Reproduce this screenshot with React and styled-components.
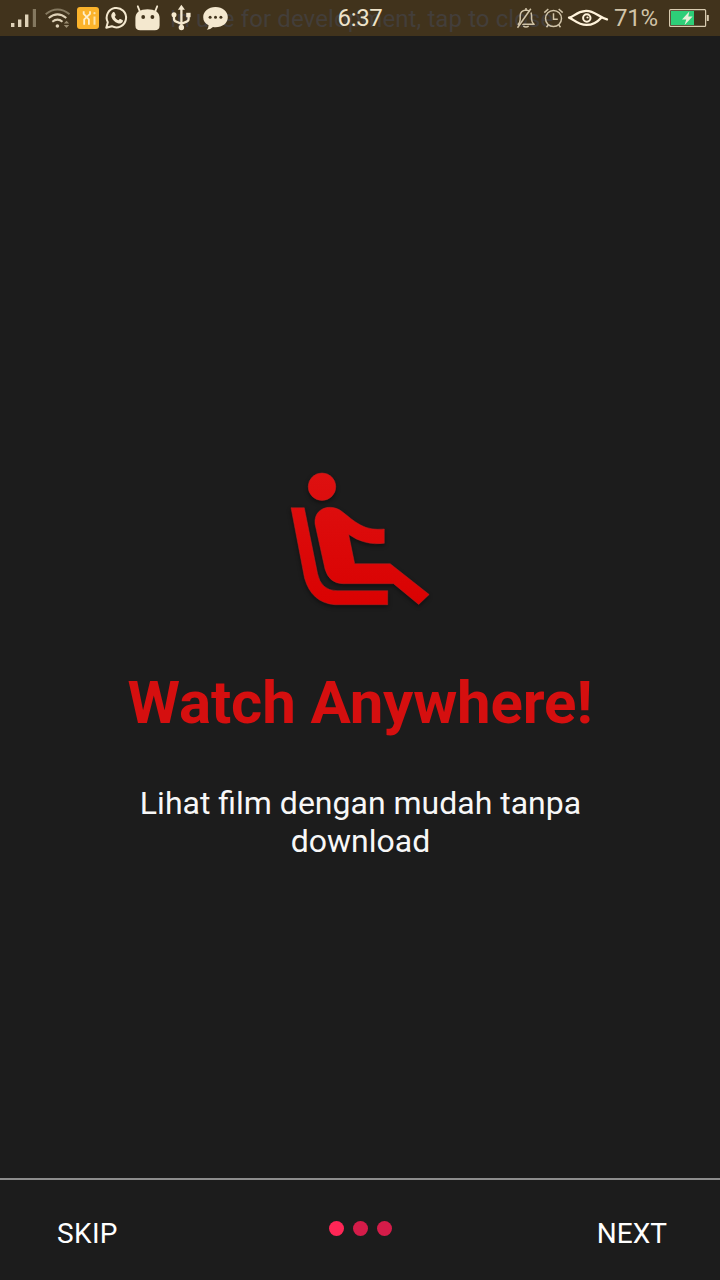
import React from 'react';
import styled, { createGlobalStyle } from 'styled-components';

const GlobalStyle = createGlobalStyle`
  * { box-sizing: border-box; }
  body { margin: 0; background: #1c1c1c; }
`;

const Screen = styled.div`
  width: 720px;
  height: 1280px;
  display: flex;
  flex-direction: column;
  overflow: hidden;
  background: #1c1c1c;
  color: #fff;
  font-family: Roboto, 'Liberation Sans', sans-serif;
`;

const StatusBar = styled.header`
  position: relative;
  flex: none;
  display: grid;
  grid-template-columns: 1fr auto 1fr;
  align-items: center;
  height: 36px;
  padding: 0 11px;
  background: #41331c;
  color: #e9dcc0;
`;

const Ticker = styled.span`
  position: absolute;
  left: 170px;
  top: 5px;
  font-size: 24px;
  line-height: 28px;
  letter-spacing: 0.1px;
  white-space: nowrap;
  color: #433e3a;
`;

const IconGroup = styled.div`
  position: relative;
  display: flex;
  align-items: center;
  justify-content: ${(p) => (p.$end ? 'flex-end' : 'flex-start')};
`;

const StatusIcon = styled.svg`
  display: block;
  flex: none;
  margin-left: ${(p) => p.$gap || 0}px;
  overflow: visible;
`;

const Clock = styled.time`
  position: relative;
  padding-top: 1px;
  font-size: 24px;
  line-height: 35px;
  letter-spacing: -0.3px;
  color: #eee3ca;
`;

const BatteryLevel = styled.span`
  width: 44px;
  margin-left: 6px;
  font-size: 24px;
  line-height: 36px;
  letter-spacing: -0.3px;
  color: #d1c4a8;
`;

const Slide = styled.main`
  flex: 1;
  display: flex;
  flex-direction: column;
  align-items: center;
  padding-top: 424px;
`;

const SeatArt = styled.svg`
  display: block;
  width: 160px;
  height: 160px;
  filter: drop-shadow(0 2px 2px rgba(0, 0, 0, 0.45));
`;

const Title = styled.h1`
  margin: 48px 0 0;
  font-size: 60px;
  font-weight: 700;
  line-height: 70px;
  letter-spacing: -0.14px;
  white-space: nowrap;
  color: #d50f0f;
`;

const Description = styled.p`
  width: 480px;
  margin: 46px 0 0;
  padding-left: 1px;
  font-size: 32px;
  line-height: 38px;
  text-align: center;
  color: #f7f7f7;
`;

const BottomBar = styled.footer`
  flex: none;
  display: grid;
  grid-template-columns: 1fr auto 1fr;
  height: 102px;
  padding: 0 53px;
  border-top: 2px solid #8d8d8d;
`;

const NavButton = styled.button`
  justify-self: ${(p) => (p.$end ? 'end' : 'start')};
  align-self: start;
  margin: 37px 0 0 ${(p) => (p.$end ? 0 : 4)}px;
  padding: 0;
  border: 0;
  background: none;
  color: #fff;
  font: 400 28px/33px Roboto, 'Liberation Sans', sans-serif;
  letter-spacing: ${(p) => (p.$end ? 0 : 0.35)}px;
`;

const Dots = styled.div`
  display: flex;
  gap: 9px;
  padding-top: 41px;
`;

const Dot = styled.i`
  width: 15px;
  height: 15px;
  border-radius: 50%;
  background: ${(p) => (p.$active ? '#ff2656' : '#d41c49')};
`;

const CREAM = '#f4e8cf';

function Icon({ x, width, gap, children }) {
  return (
    <StatusIcon width={width} height="36" viewBox={`${x} 0 ${width} 36`} $gap={gap} fill="none" aria-hidden="true">
      {children}
    </StatusIcon>
  );
}

function Notifications() {
  return (
    <IconGroup>
      <Icon x={11} width={25}>
        <path d="M11 23h3.400v4H11zM18 19.500h3.400V27H18zM25 14.500h3.400V27H25z" fill="#dfd2b8" />
        <path d="M32.800 9H36v18h-3.200z" fill="#84785f" />
      </Icon>
      <Icon x={45} width={25} gap={9}>
        <path d="M45.700 14.200Q57.500 4.800 69.500 14.200" stroke="#857960" strokeWidth="2" />
        <path d="M48.700 18Q57.500 10.800 66.300 18M52.300 21.700Q57.500 17.500 62.500 21.700" stroke="#dfd2b8" strokeWidth="2" />
        <circle cx="57.400" cy="26" r="1.800" fill="#dfd2b8" />
        <path d="m63.800 23.600 2.700-2.900 2.700 2.900zM63.800 25l2.700 2.900 2.700-2.900z" fill="#978a6f" />
      </Icon>
      <Icon x={77} width={22} gap={7}>
        <rect x="77" y="7" width="22" height="22" rx="3" fill="#fbb32b" />
        <path d="M83.700 11.200v2.600l5.200 5.600v5.300M90 11.200v2.600l-5.800 5.600v5.300" stroke="#fff0cc" strokeWidth="1.800" />
        <path d="M94.500 16.500v8.200" stroke="#fde2a6" strokeWidth="2" />
        <circle cx="94.500" cy="13.200" r="1.100" fill="#fde2a6" />
      </Icon>
      <Icon x={105} width={22} gap={6}>
        <path d="m106.300 27.700 1.500-5.500a9.700 9.700 0 1 1 4 4z" stroke={CREAM} strokeWidth="2" strokeLinejoin="round" />
        <path d="M112.700 12.400c.8-.8 1.700-.6 2.100.3l.8 2c.2.7-.2 1.200-.9 2 .9 1.700 2.100 2.800 3.900 3.600.8-.9 1.100-1.500 1.800-1.200l2 1c.7.4.6.9.3 1.600-.8 1.700-2.800 2.200-4.800 1.500-3.400-1.200-5.200-3.200-6.400-6-.7-1.900.1-3.700 1.200-4.800z" fill={CREAM} />
      </Icon>
      <Icon x={135} width={25} gap={8}>
        <path d="m137.800 6.300 2.400 6M157.200 6.300l-2.400 6" stroke={CREAM} strokeWidth="1.800" strokeLinecap="round" />
        <path d="M135.400 18q0-4.500 3.700-7 3-1.800 8.400-1.800t8.400 1.800q3.700 2.500 3.700 7v7.500q0 4.800-4.800 4.800h-14.600q-4.800 0-4.800-4.800z" fill={CREAM} />
        <circle cx="143.200" cy="17" r="1.900" fill="#42331c" />
        <circle cx="152.400" cy="17" r="1.900" fill="#42331c" />
      </Icon>
      <Icon x={171} width={20} gap={11}>
        <path d="M181.400 8v20M174 15v3.700q0 2.200 2.200 2.900l5.200 2.200 5.200-2.200q2-.7 2-2.900v-3" stroke={CREAM} strokeWidth="2.300" />
        <path d="m181.400 4.800 3.500 5h-7z" fill={CREAM} />
        <path d="M186.200 12.800h4.400v4.400h-4.400z" fill={CREAM} />
        <circle cx="174" cy="14.800" r="2.500" fill={CREAM} />
        <circle cx="181.400" cy="27.500" r="2.700" fill={CREAM} />
      </Icon>
      <Icon x={203} width={25} gap={12}>
        <path d="M215.500 7c7.100 0 12.300 4.500 12.300 10.200s-5.200 10-12.300 10q-1.300 0-2.500-.2-2.600 2.600-6.200 2.800 1.700-1.600 1.800-4.500-5.400-2.900-5.400-8.100C203.200 11.500 208.400 7 215.500 7z" fill={CREAM} />
        <circle cx="210.100" cy="17.300" r="1.500" fill="#42331c" />
        <circle cx="215.500" cy="17.300" r="1.500" fill="#42331c" />
        <circle cx="220.900" cy="17.300" r="1.500" fill="#42331c" />
      </Icon>
    </IconGroup>
  );
}

function DeviceState() {
  return (
    <IconGroup $end>
      <Icon x={516} width={20}>
        <path d="M518.200 24.300q2-1.800 2-5v-3.500q0-5.200 5.800-5.800 5.600.6 5.600 5.800v3.500q0 3.200 2.500 5z" stroke="#d1c4a8" strokeWidth="1.500" strokeLinejoin="round" />
        <path d="M526 8v2M523.300 26.200q2.700 1.800 5.400 0" stroke="#d1c4a8" strokeWidth="1.500" />
        <path d="m518.900 27.700 13-18.200" stroke="#41331c" strokeWidth="1.600" />
        <path d="m517.500 27.700 13.300-19" stroke="#d1c4a8" strokeWidth="1.500" />
      </Icon>
      <Icon x={544} width={19} gap={8}>
        <circle cx="553.500" cy="18.500" r="8" stroke="#d1c4a8" strokeWidth="1.500" />
        <path d="M553.500 13.300v5.900h4.300M544.300 12.600l4-3.600M558.700 9l4 3.600M548.200 25l-1.700 2.300M558.800 25l1.700 2.300" stroke="#d1c4a8" strokeWidth="1.500" />
      </Icon>
      <Icon x={568} width={40} gap={5}>
        <path d="M569 17.700c4.500-.3 7-6.300 17-6.800 8.500-.3 12.500 6.300 21 8.500M569 17.700c5 1.500 8 7.200 17.500 7.200 7 0 11.500-3.500 15-7.500" stroke="#fff3db" strokeWidth="2.300" strokeLinecap="round" strokeLinejoin="round" />
        <circle cx="586.800" cy="18" r="3.700" stroke="#fff3db" strokeWidth="2" />
        <circle cx="587.500" cy="17.500" r="1.100" fill="#fff3db" />
      </Icon>
      <BatteryLevel>71%</BatteryLevel>
      <Icon x={669} width={40} gap={11}>
        <rect x="669.600" y="9.600" width="36" height="16.800" rx="1" stroke="#d8cbb0" strokeWidth="1.200" />
        <path d="M671 11h23v14h-23z" fill="#2dce78" />
        <path d="M706.800 15h2v6h-2z" fill="#d8cbb0" />
        <path d="m689.300 11.500-7.300 8h4.200l-1.600 5.500 8-8.400h-4.300z" fill="#e7efd8" />
      </Icon>
    </IconGroup>
  );
}

function SeatIllustration() {
  return (
    <SeatArt viewBox="0 0 160 160" aria-hidden="true">
      <defs>
        <linearGradient id="seatRed" x1="0" y1="0" x2="0" y2="160" gradientUnits="userSpaceOnUse">
          <stop offset="0" stopColor="#de1212" />
          <stop offset="1" stopColor="#d90000" />
        </linearGradient>
      </defs>
      <g fill="url(#seatRed)" stroke="#b92222" strokeWidth="0.500">
        <circle cx="42" cy="26.700" r="13.800" />
        <path d="M11 47.700h13.300l13.200 65.600Q41 130.700 57 130.700h50.700v14H55Q31.500 143 24.500 118z" />
        <path d="M35 64C33.500 47.500 51 43 62 51.500 76 62.500 84 71 104.300 69v14.300Q85 86 68.700 74.500l6 29.200h35.500L149.200 134.500l-10.500 10-25.200-20.800H63Q49 123.500 45 109z" />
      </g>
    </SeatArt>
  );
}

export default function App() {
  return (
    <>
      <GlobalStyle />
      <Screen>
        <StatusBar>
          <Ticker>In use for development, tap to close</Ticker>
          <Notifications />
          <Clock>6:37</Clock>
          <DeviceState />
        </StatusBar>
        <Slide>
          <SeatIllustration />
          <Title>Watch Anywhere!</Title>
          <Description>Lihat film dengan mudah tanpa download</Description>
        </Slide>
        <BottomBar>
          <NavButton type="button">SKIP</NavButton>
          <Dots>
            <Dot $active />
            <Dot />
            <Dot />
          </Dots>
          <NavButton type="button" $end>NEXT</NavButton>
        </BottomBar>
      </Screen>
    </>
  );
}
